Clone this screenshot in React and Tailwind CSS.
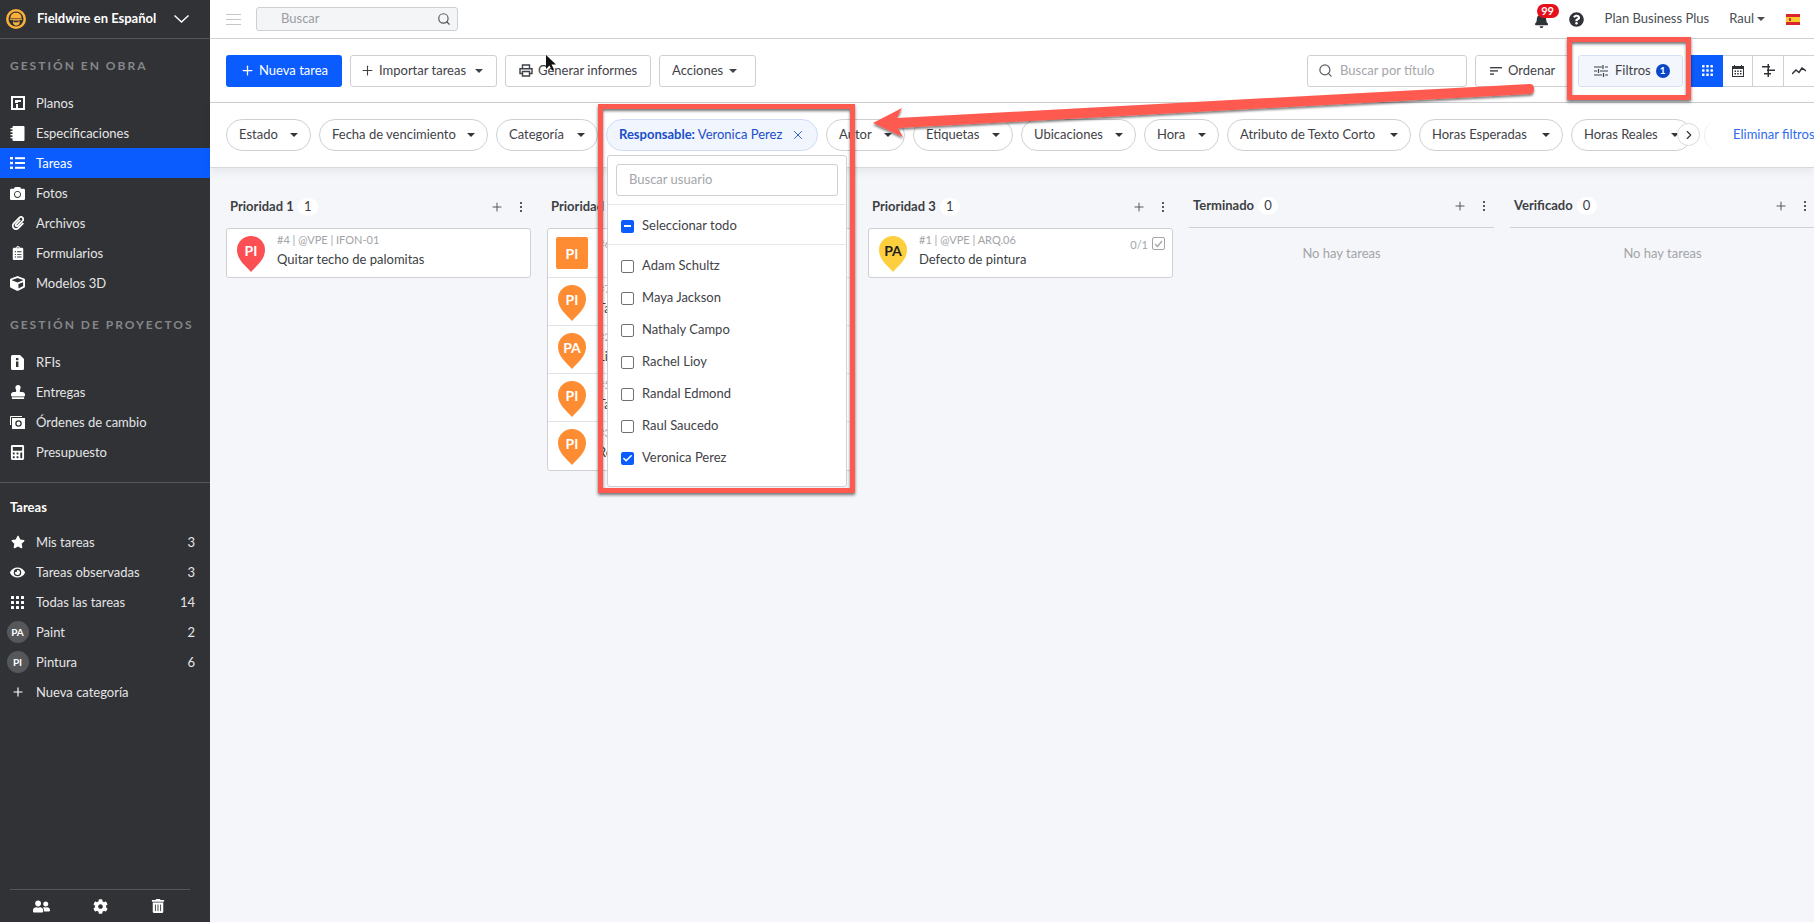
import React from "react";
import {
  FaBell,
  FaCalculator,
  FaCamera,
  FaCog,
  FaCube,
  FaEye,
  FaPaperclip,
  FaQuestionCircle,
  FaStamp,
  FaStar,
  FaTrashAlt,
  FaUserFriends,
  FaClipboardList,
} from "react-icons/fa";
import { Check, ChevronRight, Plus, Search, X } from "lucide-react";

const Caret = ({ className = "text-[#33363a]" }) => (
  <svg width="8" height="4" viewBox="0 0 8 4" className={`shrink-0 ${className}`}>
    <path d="M0 0h8L4 4z" fill="currentColor" />
  </svg>
);

const DotsGrid = ({ size = 13 }) => (
  <svg width={size} height={size} viewBox="0 0 13 13" fill="currentColor">
    {[0, 5, 10].map((y) =>
      [0, 5, 10].map((x) => <rect key={`${x}-${y}`} x={x} y={y} width="3" height="3" rx="0.5" />)
    )}
  </svg>
);

const PlansIcon = () => (
  <svg width="14" height="14" viewBox="0 0 14 14">
    <path fillRule="evenodd" fill="currentColor" d="M0 0h14v14H0zM2 2v10h3V8h2v4h5V2zM4 4h6v2H7v1H4z" />
  </svg>
);

const SpecsIcon = () => (
  <svg width="15" height="15" viewBox="0 0 15 15" fill="currentColor">
    <rect x="2.500" y="0" width="12" height="15" rx="1" />
    <rect x="0.500" y="2" width="3.500" height="1.300" />
    <rect x="0.500" y="5" width="3.500" height="1.300" />
    <rect x="0.500" y="8" width="3.500" height="1.300" />
    <rect x="0.500" y="11" width="3.500" height="1.300" />
  </svg>
);

const ListIcon = () => (
  <svg width="15" height="12" viewBox="0 0 15 12" fill="currentColor">
    <rect x="0" y="0" width="3" height="2.4" />
    <rect x="0" y="4.8" width="3" height="2.4" />
    <rect x="0" y="9.6" width="3" height="2.4" />
    <rect x="5" y="0.2" width="10" height="2" />
    <rect x="5" y="5" width="10" height="2" />
    <rect x="5" y="9.8" width="10" height="2" />
  </svg>
);

const RfiIcon = () => (
  <svg width="13" height="15" viewBox="0 0 13 15">
    <path fill="currentColor" d="M1.5 0H9l4 4v9.5a1.5 1.5 0 0 1-1.5 1.5h-10A1.5 1.5 0 0 1 0 13.5v-12A1.5 1.5 0 0 1 1.5 0z" />
    <rect x="5" y="3" width="2.4" height="2.2" fill="#313235" />
    <rect x="5" y="6.5" width="2.4" height="5.5" fill="#313235" />
  </svg>
);

const ChangeIcon = () => (
  <svg width="15" height="13" viewBox="0 0 15 13" fill="none" stroke="currentColor">
    <path d="M.5 9V.5H12" strokeWidth="1" />
    <rect x="2.5" y="2.5" width="12" height="10" fill="currentColor" />
    <circle cx="8.5" cy="7.5" r="2.6" stroke="#313235" strokeWidth="1.3" />
  </svg>
);

const PrinterIcon = () => (
  <svg width="14" height="13" viewBox="0 0 14 13" fill="none" stroke="currentColor" strokeWidth="1.4" className="shrink-0">
    <path d="M3.500 4V1h7v3" />
    <path d="M3 9.500H1V4.700h12v4.800h-2" />
    <path d="M3.500 7.500h7V12h-7z" />
  </svg>
);

const Logo = () => (
  <svg width="20" height="20" viewBox="0 0 20 20" className="shrink-0">
    <circle cx="10" cy="10" r="10" fill="#fbb03b" />
    <circle cx="10" cy="10" r="7.500" fill="#313235" />
    <path d="M4.500 9C4.500 5.500 7 3.700 10 3.700s5.500 1.800 5.500 5.300z" fill="#fbb03b" />
    <rect x="4" y="9.600" width="12" height="1.300" fill="#fbb03b" />
    <path d="M7 11.500h6.500V15l-2 1.500H9L7 14.500z" fill="#fbb03b" />
    <rect x="7.500" y="12" width="5" height="1.300" fill="#313235" />
  </svg>
);

const FlagEs = () => (
  <div className="w-[14px] h-[11px] flex flex-col">
    <div className="h-[3px] bg-[#d8262c]" />
    <div className="h-[5px] bg-[#f9c92e] pl-[3px] pt-[1px]">
      <div className="w-[2px] h-[3px] bg-[#c0392b]" />
    </div>
    <div className="h-[3px] bg-[#d8262c]" />
  </div>
);

const navWork = [
  { label: "Planos", icon: <PlansIcon /> },
  { label: "Especificaciones", icon: <SpecsIcon /> },
  { label: "Tareas", icon: <ListIcon />, active: true },
  { label: "Fotos", icon: <FaCamera size={15} /> },
  { label: "Archivos", icon: <FaPaperclip size={14} /> },
  { label: "Formularios", icon: <FaClipboardList size={14} /> },
  { label: "Modelos 3D", icon: <FaCube size={15} /> },
];

const navProject = [
  { label: "RFIs", icon: <RfiIcon /> },
  { label: "Entregas", icon: <FaStamp size={14} /> },
  { label: "Órdenes de cambio", icon: <ChangeIcon /> },
  { label: "Presupuesto", icon: <FaCalculator size={15} /> },
];

const navTasks = [
  { label: "Mis tareas", icon: <FaStar size={14} />, count: 3 },
  { label: "Tareas observadas", icon: <FaEye size={15} />, count: 3 },
  { label: "Todas las tareas", icon: <DotsGrid />, count: 14 },
  { label: "Paint", badge: "PA", count: 2 },
  { label: "Pintura", badge: "PI", count: 6 },
  { label: "Nueva categoría", icon: <Plus size={14} /> },
];

const NavItem = ({ item }) => (
  <div
    className={`h-[30px] flex items-center pr-[15px] text-[13px] ${
      item.active ? "bg-[#0a5cff] text-white" : "text-[#e4e5e6]"
    }`}
  >
    <div className="w-[36px] flex justify-center pr-[1px] text-white">
      {item.badge ? (
        <div className="w-[22px] h-[22px] rounded-full bg-[#55575a] flex items-center justify-center text-[10px] font-bold">
          {item.badge}
        </div>
      ) : (
        item.icon
      )}
    </div>
    <span className="flex-1 pt-[1px]">{item.label}</span>
    {item.count != null && <span className="pt-[1px]">{item.count}</span>}
  </div>
);

const Sidebar = () => (
  <aside className="w-[210px] shrink-0 h-full bg-[#313235] flex flex-col">
    <div className="h-[39px] shrink-0 border-b border-[#55575a] flex items-center pl-[6px] pr-[21px] text-white">
      <Logo />
      <span className="ml-[11px] flex-1 text-[13px] font-bold whitespace-nowrap">Fieldwire en Español</span>
      <svg width="15" height="8" viewBox="0 0 15 8" fill="none" stroke="currentColor" strokeWidth="1.4">
        <path d="M.5.5l7 6.500 7-6.500" />
      </svg>
    </div>
    <div className="pl-[10px] mt-[19px] h-[16px] flex items-center text-[12px] font-bold tracking-[2px] text-[#85878a]">
      GESTIÓN EN OBRA
    </div>
    <div className="mt-[14px]">
      {navWork.map((item) => (
        <NavItem key={item.label} item={item} />
      ))}
    </div>
    <div className="pl-[10px] mt-[19px] h-[16px] flex items-center text-[12px] font-bold tracking-[2px] text-[#85878a] whitespace-nowrap">
      GESTIÓN DE PROYECTOS
    </div>
    <div className="mt-[14px]">
      {navProject.map((item) => (
        <NavItem key={item.label} item={item} />
      ))}
    </div>
    <div className="mt-[15px] border-t border-[#55575a]" />
    <div className="pl-[10px] mt-[16px] h-[18px] flex items-center text-[13px] font-bold text-white">Tareas</div>
    <div className="mt-[10px]">
      {navTasks.map((item) => (
        <NavItem key={item.label} item={item} />
      ))}
    </div>
    <div className="mt-auto ml-[10px] mr-[20px] border-t border-[#55575a] h-[33px] flex items-center justify-between pl-[23px] pr-[25px] text-white">
      <FaUserFriends size={17} />
      <FaCog size={15} />
      <FaTrashAlt size={14} />
    </div>
  </aside>
);

const TopBar = () => (
  <div className="h-[39px] shrink-0 bg-white border-b border-[#cfd0d4] flex items-center pl-[16px] pr-[14px]">
    <div className="w-[15px] flex flex-col gap-[4px]">
      <div className="h-px bg-[#c4c6ca]" />
      <div className="h-px bg-[#c4c6ca]" />
      <div className="h-px bg-[#c4c6ca]" />
    </div>
    <div className="ml-[15px] w-[202px] h-[24px] rounded-[3px] border border-[#cfd0d4] bg-[#f4f5f7] flex items-center pl-[24px] pr-[6px] text-[13px] text-[#9b9da1]">
      <span className="flex-1">Buscar</span>
      <Search size={14} className="text-[#55585c]" />
    </div>
    <div className="ml-auto flex items-center text-[13px] text-[#4a4d52]">
      <div className="relative mt-[3px]">
        <FaBell size={15} className="text-[#2f3237]" />
        <div className="absolute -top-[9px] -right-[10px] w-[22px] h-[14px] rounded-full bg-[#e6101c] text-white text-[11px] font-bold flex items-center justify-center">
          99
        </div>
      </div>
      <FaQuestionCircle size={15} className="text-[#2f3237] ml-[20px]" />
      <span className="ml-[21px]">Plan Business Plus</span>
      <span className="ml-[20px]">Raul</span>
      <Caret className="ml-[3px] text-[#4a4d52]" />
      <div className="ml-[21px]">
        <FlagEs />
      </div>
    </div>
  </div>
);

const Btn = ({ className = "", children }) => (
  <div
    className={`h-[32px] shrink-0 rounded-[3px] border border-[#cfd0d4] bg-white flex items-center text-[13px] text-[#3f4247] whitespace-nowrap ${className}`}
  >
    {children}
  </div>
);

const ToolBar = () => (
  <div className="h-[64px] shrink-0 bg-white border-b border-[#cfd0d4] flex items-center pl-[16px]">
    <div className="h-[32px] w-[116px] rounded-[3px] bg-[#0a5cff] text-white text-[13px] flex items-center pl-[14px]">
      <Plus size={15} strokeWidth={2} />
      <span className="ml-[4px]">Nueva tarea</span>
    </div>
    <Btn className="ml-[8px] w-[147px] pl-[9px]">
      <Plus size={15} strokeWidth={1.75} />
      <span className="ml-[4px]">Importar tareas</span>
      <Caret className="ml-[9px]" />
    </Btn>
    <Btn className="ml-[8px] w-[146px] pl-[13px]">
      <PrinterIcon />
      <span className="ml-[5px]">Generar informes</span>
    </Btn>
    <Btn className="ml-[8px] w-[97px] pl-[12px]">
      <span>Acciones</span>
      <Caret className="ml-[6px]" />
    </Btn>
    <div className="ml-auto flex items-center">
      <Btn className="w-[160px] pl-[10px] text-[#a4a6aa]">
        <Search size={15} className="text-[#5c5f63]" />
        <span className="ml-[7px]">Buscar por título</span>
      </Btn>
      <Btn className="ml-[8px] w-[96px] pl-[14px]">
        <svg width="12" height="8" viewBox="0 0 12 8" fill="currentColor">
          <rect width="12" height="1.4" />
          <rect y="3.2" width="8" height="1.4" />
          <rect y="6.4" width="4" height="1.4" />
        </svg>
        <span className="ml-[6px]">Ordenar</span>
      </Btn>
      <div className="ml-[7px] h-[32px] w-[105px] rounded-[3px] border border-[#d5e0f7] bg-[#f3f6fd] flex items-center pl-[15px] text-[13px] text-[#3f4247]">
        <svg width="14" height="12" viewBox="0 0 14 12" fill="none" stroke="currentColor" strokeWidth="1.2">
          <path d="M0 2h8M11 2h3M9 0v4M0 6h3M6 6h8M4.500 4v4M0 10h8M11 10h3M9.500 8v4" />
        </svg>
        <span className="ml-[7px]">Filtros</span>
        <div className="ml-[5px] w-[14px] h-[14px] rounded-full bg-[#0a46c8] text-white text-[10px] font-bold flex items-center justify-center">
          1
        </div>
      </div>
      <div className="ml-[8px] h-[32px] w-[123px] flex items-stretch border-y border-[#cfd0d4] text-[#2f3237]">
        <div className="w-[32px] -my-px bg-[#0a5cff] text-white flex items-center justify-center">
          <DotsGrid size={11} />
        </div>
        <div className="w-[30px] border-r border-[#cfd0d4] flex items-center justify-center">
          <svg width="12" height="12" viewBox="0 0 12 12">
            <path fill="currentColor" d="M2 0h1v1h6V0h1v1h2v11H0V1h2zM1 4v7h10V4z" />
            <path fill="currentColor" d="M2.500 5.500h1.500v1.500H2.500zM5.200 5.500h1.500v1.500H5.200zM8 5.500h1.500v1.500H8zM2.500 8h1.500v1.500H2.500zM5.200 8h1.500v1.500H5.200zM8 8h1.500v1.500H8z" />
          </svg>
        </div>
        <div className="w-[31px] border-r border-[#cfd0d4] flex items-center justify-center">
          <svg width="13" height="13" viewBox="0 0 13 13" fill="currentColor">
            <rect x="5.500" y="0" width="1.500" height="13" />
            <rect x="0" y="2" width="8" height="1.500" />
            <rect x="5" y="5.500" width="8" height="1.500" />
            <rect x="2" y="9" width="7" height="1.500" />
          </svg>
        </div>
        <div className="flex-1 flex items-center pl-[8px]">
          <svg width="14" height="8" viewBox="0 0 14 8" fill="none" stroke="currentColor" strokeWidth="1.5">
            <path d="M0 7l4-4 3 2.500L10 1l4 3" />
          </svg>
        </div>
      </div>
    </div>
  </div>
);

const Pill = ({ label, className = "" }) => (
  <div
    className={`h-[32px] shrink-0 rounded-full border border-[#cfd0d4] bg-white flex items-center justify-between px-[12px] text-[13px] text-[#3f4247] whitespace-nowrap ${className}`}
  >
    <span>{label}</span>
    <Caret />
  </div>
);

const FilterBar = () => (
  <div className="relative z-10 h-[65px] shrink-0 bg-white border-b border-[#d8d9dc] shadow-[0_3px_10px_rgba(0,0,0,0.07)] flex items-center pl-[16px] overflow-hidden">
    <div className="flex w-[1466px] shrink-0 overflow-hidden gap-[8px]">
      <Pill label="Estado" className="w-[85px]" />
      <Pill label="Fecha de vencimiento" className="w-[169px]" />
      <Pill label="Categoría" className="w-[102px]" />
      <div className="h-[32px] w-[212px] shrink-0 rounded-full border border-[#cfdcf7] bg-[#f1f5fe] flex items-center justify-between pl-[12px] pr-[12px] text-[13px] text-[#1a4fc9] whitespace-nowrap">
        <span>
          <span className="font-bold">Responsable:</span> Veronica Perez
        </span>
        <X size={14} strokeWidth={1.5} />
      </div>
      <Pill label="Autor" className="w-[79px]" />
      <Pill label="Etiquetas" className="w-[100px]" />
      <Pill label="Ubicaciones" className="w-[115px]" />
      <Pill label="Hora" className="w-[75px]" />
      <Pill label="Atributo de Texto Corto" className="w-[184px]" />
      <Pill label="Horas Esperadas" className="w-[144px]" />
      <Pill label="Horas Reales" className="w-[121px]" />
    </div>
    <div className="absolute left-[1467px] top-[20px] w-[23px] h-[23px] rounded-full border border-[#d8d9dc] bg-white flex items-center justify-center text-[#33363a]">
      <ChevronRight size={14} />
    </div>
    <div className="ml-[12px] w-[29px] h-[32px] shrink-0 rounded-l-full border-l border-[#eeeef0]" />
    <div className="text-[13px] text-[#2f6bf0] whitespace-nowrap">Eliminar filtros</div>
  </div>
);

const Pin = ({ color, label, textColor = "text-white" }) => (
  <div className="relative shrink-0 w-[28px] h-[36px] flex justify-center pt-[7px]">
    <svg width="28" height="36" viewBox="0 0 28 36" className="absolute left-0 top-0">
      <path fill={color} d="M14 36C9 30 0 24 0 14a14 14 0 0 1 28 0c0 10-9 16-14 22z" />
    </svg>
    <span className={`relative text-[14px] font-bold leading-[16px] ${textColor}`}>{label}</span>
  </div>
);

const TaskRow = ({ pin, meta, title, extra }) => (
  <div className="h-[48px] flex pl-[10px] pt-[7px]">
    {pin}
    <div className="ml-[12px] flex-1 min-w-0 -mt-[3px]">
      <div className="text-[11px] leading-[14px] text-[#a2a4a8]">{meta}</div>
      <div className="text-[13px] leading-[18px] mt-[3px] text-[#3c3f44]">{title}</div>
    </div>
    {extra}
  </div>
);

const ColumnHeader = ({ title, count, ruled }) => (
  <div className={`h-[44px] flex items-center pl-[4px] pr-[5px] ${ruled ? "border-b border-[#cfd0d4]" : "pt-[2px]"}`}>
    <span className="text-[13px] font-bold text-[#3c3f44]">{title}</span>
    <div className="ml-[4px] w-[20px] h-[18px] rounded-full bg-white flex items-center justify-center text-[13px] text-[#3c3f44]">
      {count}
    </div>
    <Plus size={14} strokeWidth={1.75} className="ml-auto text-[#55585c]" />
    <div className="ml-[12px] w-[10px] flex flex-col items-center gap-[2px]">
      <div className="w-[2px] h-[2px] bg-[#55585c]" />
      <div className="w-[2px] h-[2px] bg-[#55585c]" />
      <div className="w-[2px] h-[2px] bg-[#55585c]" />
    </div>
  </div>
);

const Board = () => (
  <div className="flex-1 bg-[#f5f6f9] pl-[16px] pt-[16px] flex gap-[16px]">
    <div className="w-[305px] shrink-0">
      <ColumnHeader title="Prioridad 1" count={1} />
      <div className="rounded-[3px] border border-[#cfd0d4] bg-white">
        <TaskRow
          pin={<Pin color="#fb4f54" label="PI" />}
          meta="#4 | @VPE | IFON-01"
          title="Quitar techo de palomitas"
        />
      </div>
    </div>
    <div className="w-[305px] shrink-0">
      <ColumnHeader title="Prioridad 2" count={5} />
      <div className="rounded-[3px] border border-[#cfd0d4] bg-white divide-y divide-[#e2e3e6]">
        <div className="h-[49px] flex pl-[8px] pt-[8px]">
          <div className="w-[32px] h-[32px] rounded-[2px] bg-[#fd8c33] text-white text-[14px] font-bold flex items-center justify-center">
            PI
          </div>
          <div className="ml-[10px] text-[11px] leading-[14px] text-[#a2a4a8]">#6 | @VPE | IFON-03</div>
        </div>
        <TaskRow pin={<Pin color="#fd8c33" label="PI" />} meta="#7 | @VPE" title="Tapar grietas" />
        <TaskRow pin={<Pin color="#fd8c33" label="PA" />} meta="#2 | @VPE" title="Lijar muro" />
        <TaskRow pin={<Pin color="#fd8c33" label="PI" />} meta="#5 | @VPE" title="Tapar grietas" />
        <TaskRow pin={<Pin color="#fd8c33" label="PI" />} meta="#3 | @VPE" title="Resanar techo" />
      </div>
    </div>
    <div className="w-[305px] shrink-0">
      <ColumnHeader title="Prioridad 3" count={1} />
      <div className="rounded-[3px] border border-[#cfd0d4] bg-white">
        <TaskRow
          pin={<Pin color="#fdcf3f" label="PA" textColor="text-[#1d1d1f]" />}
          meta="#1 | @VPE | ARQ.06"
          title="Defecto de pintura"
          extra={
            <div className="flex items-start pr-[7px] pt-[1px] text-[11px] leading-[14px] text-[#a2a4a8]">
              <span className="mt-[1px]">0/1</span>
              <div className="ml-[4px] w-[13px] h-[13px] rounded-[2px] border border-[#a2a4a8] flex items-center justify-center">
                <svg width="9" height="8" viewBox="0 0 9 8" fill="none" stroke="currentColor" strokeWidth="1.2">
                  <path d="M1 4l2.500 2.500L8 1" />
                </svg>
              </div>
            </div>
          }
        />
      </div>
    </div>
    {["Terminado", "Verificado"].map((title) => (
      <div key={title} className="w-[305px] shrink-0">
        <ColumnHeader title={title} count={0} ruled />
        <div className="mt-[16px] text-center text-[13px] leading-[18px] text-[#a2a4a8]">No hay tareas</div>
      </div>
    ))}
  </div>
);

const users = [
  { name: "Adam Schultz" },
  { name: "Maya Jackson" },
  { name: "Nathaly Campo" },
  { name: "Rachel Lioy" },
  { name: "Randal Edmond" },
  { name: "Raul Saucedo" },
  { name: "Veronica Perez", checked: true },
];

const UserDropdown = () => (
  <div className="absolute z-20 left-[607px] top-[155px] w-[240px] h-[332px] rounded-[3px] border border-[#cfd0d4] bg-white text-[13px] text-[#3f4247]">
    <div className="h-[49px] px-[8px] pt-[8px] border-b border-[#e6e7ea]">
      <div className="h-[32px] rounded-[3px] border border-[#cfd0d4] pl-[12px] flex items-center text-[#a4a6aa]">
        Buscar usuario
      </div>
    </div>
    <div className="h-[40px] pt-[3px] border-b border-[#e6e7ea] flex items-center pl-[13px]">
      <div className="w-[13px] h-[13px] rounded-[2px] bg-[#0a5cff] flex items-center justify-center">
        <div className="w-[7px] h-[2px] bg-white" />
      </div>
      <span className="ml-[8px]">Seleccionar todo</span>
    </div>
    <div className="pt-[5px]">
      {users.map((u) => (
        <div key={u.name} className="h-[32px] flex items-center pl-[13px]">
          {u.checked ? (
            <div className="w-[13px] h-[13px] rounded-[2px] bg-[#0a5cff] flex items-center justify-center text-white">
              <Check size={11} strokeWidth={3.5} />
            </div>
          ) : (
            <div className="w-[13px] h-[13px] rounded-[2px] border border-[#6f7175] bg-white" />
          )}
          <span className="ml-[8px]">{u.name}</span>
        </div>
      ))}
    </div>
  </div>
);

// annotations painted on top of the screenshot
const Annotations = () => (
  <>
    <div className="absolute z-30 left-[598px] top-[104px] w-[257px] h-[389px] border-[5px] border-[#ff5a4f] shadow-[0_2px_3px_rgba(0,0,0,0.55),inset_0_2px_3px_rgba(0,0,0,0.55)]" />
    <div className="absolute z-30 left-[1567px] top-[37px] w-[124px] h-[63px] border-[5px] border-[#ff5a4f] shadow-[0_2px_3px_rgba(0,0,0,0.55),inset_0_2px_3px_rgba(0,0,0,0.55)]" />
    <svg className="absolute z-30 left-0 top-0 pointer-events-none" width="1814" height="922">
      <defs>
        <filter id="arrowShadow" x="-5%" y="-30%" width="110%" height="160%">
          <feDropShadow dx="0" dy="2" stdDeviation="1.2" floodColor="#000" floodOpacity="0.5" />
        </filter>
      </defs>
      <path
        filter="url(#arrowShadow)"
        fill="#ff5a4f"
        d="M873 123L902 108L897 118L1530 84Q1534 84 1534 89Q1534 94 1530 94L898 128L903 137Z"
      />
    </svg>
    <svg className="absolute z-30 left-[545px] top-[54px]" width="12" height="18" viewBox="0 0 12 18">
      <path d="M1 1v14l3.500-3.500 2.500 5 2-1-2.500-5H11z" fill="#111" />
    </svg>
  </>
);

const App = () => (
  <div className="relative w-full h-[922px] overflow-hidden flex font-['Lato',sans-serif]">
    <Sidebar />
    <div className="flex-1 min-w-0 flex flex-col">
      <TopBar />
      <ToolBar />
      <FilterBar />
      <Board />
    </div>
    <UserDropdown />
    <Annotations />
  </div>
);

export default App;
